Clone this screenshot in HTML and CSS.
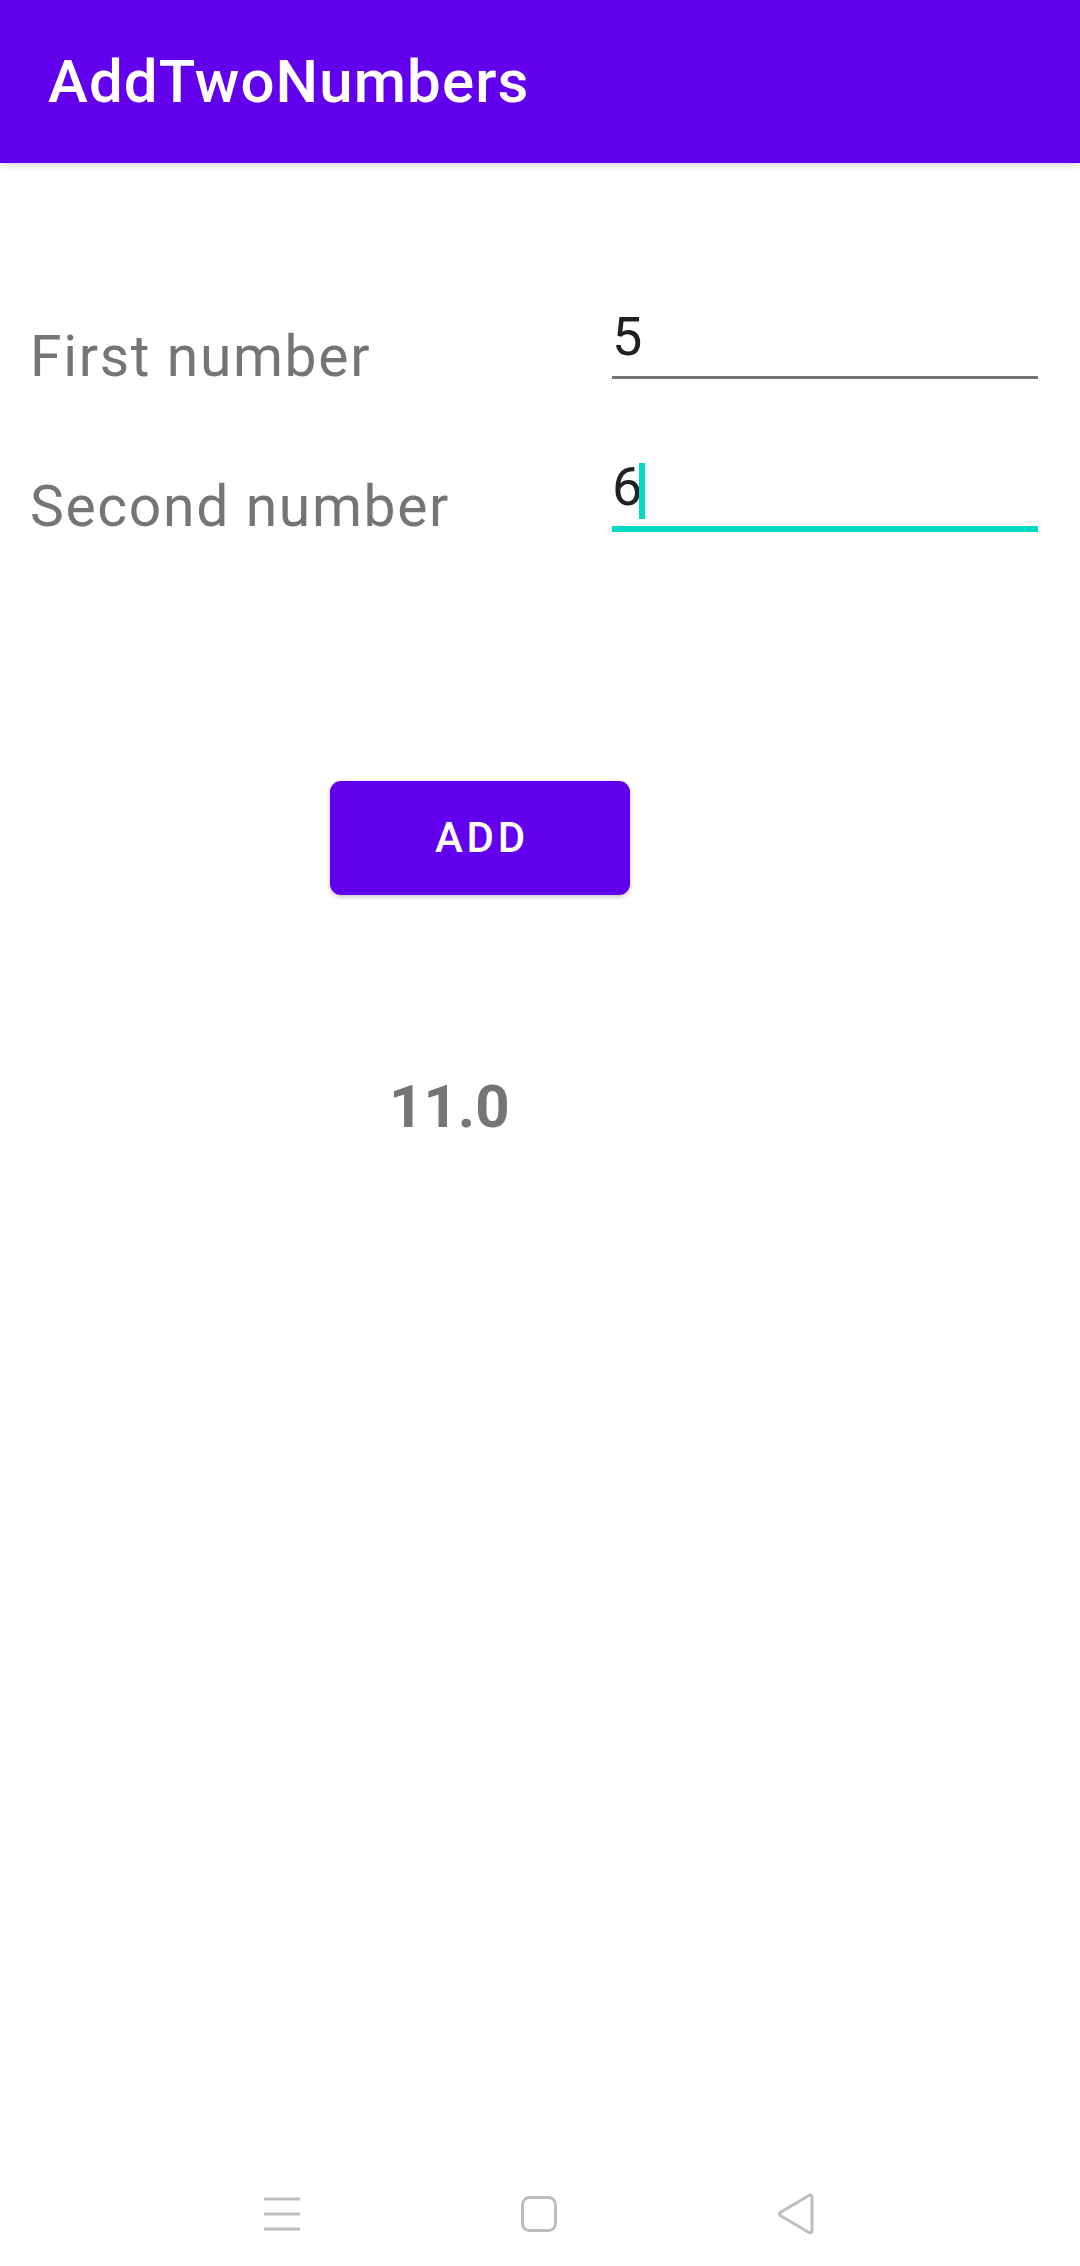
FILE: index.html
```html
<!DOCTYPE html>
<html>
<head>
<meta charset="utf-8">
<link rel="stylesheet" href="styles.css">
</head>
<body>
<header class="appbar">
  <h1 class="title">AddTwoNumbers</h1>
</header>
<main class="content">
  <div class="form">
    <div class="row">
      <div class="label">First number</div>
      <div class="field">
        <div class="value">5</div>
      </div>
    </div>
    <div class="row">
      <div class="label">Second number</div>
      <div class="field focused">
        <div class="value">6<span class="cursor"></span></div>
      </div>
    </div>
  </div>
  <button class="add-btn">ADD</button>
  <div class="result">11.0</div>
</main>
<nav class="navbar">
  <svg class="nav-icon" width="40" height="44" viewBox="0 0 40 44">
    <line x1="2" y1="7" x2="38" y2="7" stroke="#bdbdbd" stroke-width="3"/>
    <line x1="2" y1="22" x2="38" y2="22" stroke="#bdbdbd" stroke-width="3"/>
    <line x1="2" y1="37" x2="38" y2="37" stroke="#bdbdbd" stroke-width="3"/>
  </svg>
  <svg class="nav-icon" width="40" height="44" viewBox="0 0 40 44">
    <rect x="3.5" y="5.5" width="33" height="33" rx="7" fill="none" stroke="#bdbdbd" stroke-width="3"/>
  </svg>
  <svg class="nav-icon" width="40" height="44" viewBox="0 0 40 44">
    <path d="M33 3.5 Q36 2 36 6 L36 38 Q36 42 33 40.5 L5 24 Q2 22 5 20 Z" fill="none" stroke="#bdbdbd" stroke-width="3" stroke-linejoin="round"/>
  </svg>
</nav>
</body>
</html>
```
FILE: styles.css
```css
html, body {
  margin: 0;
  padding: 0;
}
body {
  width: 1080px;
  height: 2266px;
  background: #ffffff;
  font-family: Roboto, "Noto Sans", sans-serif;
  display: flex;
  flex-direction: column;
  overflow: hidden;
}
.appbar {
  height: 163px;
  box-sizing: border-box;
  padding: 51.5px 0 0 48px;
  background: #6200ee;
  box-shadow: 0 2px 8px rgba(0, 0, 0, 0.18);
  position: relative;
  z-index: 1;
  flex: none;
}
.title {
  margin: 0;
  font-size: 60px;
  line-height: 60px;
  font-weight: 500;
  letter-spacing: 1.1px;
  color: #ffffff;
}
.content {
  display: flex;
  flex-direction: column;
  align-items: flex-start;
}
.form {
  margin-top: 146.5px;
  padding-left: 30px;
  display: flex;
  flex-direction: column;
  gap: 74.5px;
}
.row {
  display: flex;
  align-items: flex-start;
}
.label {
  width: 582px;
  margin-top: 18.5px;
  font-size: 57px;
  line-height: 57px;
  letter-spacing: 1.65px;
  color: #757575;
}
.field {
  width: 426px;
  padding-bottom: 12.5px;
  border-bottom: 3px solid #757575;
}
.field.focused {
  border-bottom: 6px solid #03dac5;
}
.value {
  height: 54px;
  font-size: 54px;
  line-height: 54px;
  color: #212121;
}
.cursor {
  display: inline-block;
  width: 6px;
  height: 56px;
  margin-left: -3px;
  background: #03dac5;
  vertical-align: -14px;
}
.add-btn {
  margin-top: 246px;
  margin-left: 330px;
  width: 300px;
  height: 114px;
  border: none;
  border-radius: 11px;
  background: #6200ee;
  color: #ffffff;
  font-family: Roboto, "Noto Sans", sans-serif;
  font-size: 42px;
  line-height: 42px;
  font-weight: 500;
  letter-spacing: 3.75px;
  padding: 0 0 0 3.75px;
  box-shadow: 0 2px 5px rgba(0, 0, 0, 0.22);
}
.result {
  margin-top: 181.5px;
  margin-left: 389px;
  font-size: 60px;
  line-height: 60px;
  font-weight: 700;
  color: #757575;
}
.navbar {
  margin-top: auto;
  height: 104px;
  display: flex;
  align-items: center;
  padding-left: 262px;
  gap: 217px;
  flex: none;
}
.nav-icon {
  display: block;
}
```
